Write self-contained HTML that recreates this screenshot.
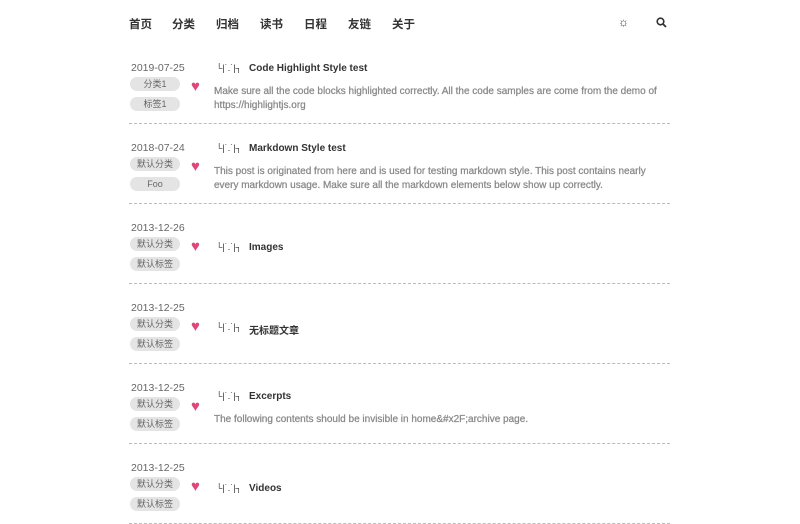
<html><head><style>
body{margin:0;width:800px;height:500px;overflow:hidden;background:#fff;font-family:"Liberation Sans","Noto Sans CJK SC",sans-serif;color:#333}
.nav{position:absolute;top:16px;left:129px;font-size:11.5px;font-weight:bold;color:#333}
.nav span{position:absolute;white-space:nowrap}
.e{position:absolute;left:129px;width:541px;height:80px;border-bottom:1px dashed #bbb}
.d{position:absolute;left:2px;top:0;font-size:10.5px;color:#666}
.t{position:absolute;left:1px;width:50px;height:14px;border-radius:7px;background:#e4e4e4;font-size:9px;color:#666;text-align:center;line-height:14px}
.h{position:absolute;left:62px;color:#e0457b;font-size:15px}
.ti{position:absolute;left:87px;font-size:10px;font-weight:bold;color:#333;white-space:nowrap}
.ti b{display:inline-block;width:33px;font-weight:normal;font-size:9px;letter-spacing:0;overflow:hidden;vertical-align:top}
.p{position:absolute;left:85px;width:445px;font-size:10px;color:#888;line-height:14px;-webkit-text-stroke:0.25px #888}
</style></head><body>
<div class="nav"><span style="left:0">首页</span><span style="left:43px">分类</span><span style="left:87px">归档</span><span style="left:131px">读书</span><span style="left:175px">日程</span><span style="left:219px">友链</span><span style="left:263px">关于</span><span style="left:489px;font-size:12px;top:-1px">☼</span><span style="left:527px;top:1px">
<svg width="11" height="11" viewBox="0 0 11 11"><circle cx="4.5" cy="4.5" r="3.3" fill="none" stroke="#333" stroke-width="1.6"/><path d="M7 7l3 3" stroke="#333" stroke-width="1.8"/></svg></span></div>

<div class="e" style="top:43px"><div class="d" style="top:19px">2019-07-25</div><div class="t" style="top:34px">分类1</div><div class="t" style="top:54px">标签1</div><div class="h" style="top:35px">♥</div><div class="ti" style="top:20px"><b>└|˙.˙|┐</b>Code Highlight Style test</div><div class="p" style="top:42px">Make sure all the code blocks highlighted correctly. All the code samples are come from the demo of https://highlightjs.org</div></div>

<div class="e" style="top:123px"><div class="d" style="top:19px">2018-07-24</div><div class="t" style="top:34px">默认分类</div><div class="t" style="top:54px">Foo</div><div class="h" style="top:35px">♥</div><div class="ti" style="top:20px"><b>└|˙.˙|┐</b>Markdown Style test</div><div class="p" style="top:42px">This post is originated from here and is used for testing markdown style. This post contains nearly every markdown usage. Make sure all the markdown elements below show up correctly.</div></div>

<div class="e" style="top:203px"><div class="d" style="top:19px">2013-12-26</div><div class="t" style="top:34px">默认分类</div><div class="t" style="top:54px">默认标签</div><div class="h" style="top:35px">♥</div><div class="ti" style="top:39px"><b>└|˙.˙|┐</b>Images</div></div>

<div class="e" style="top:283px"><div class="d" style="top:19px">2013-12-25</div><div class="t" style="top:34px">默认分类</div><div class="t" style="top:54px">默认标签</div><div class="h" style="top:35px">♥</div><div class="ti" style="top:39px"><b>└|˙.˙|┐</b>无标题文章</div></div>

<div class="e" style="top:363px"><div class="d" style="top:19px">2013-12-25</div><div class="t" style="top:34px">默认分类</div><div class="t" style="top:54px">默认标签</div><div class="h" style="top:35px">♥</div><div class="ti" style="top:28px"><b>└|˙.˙|┐</b>Excerpts</div><div class="p" style="top:50px">The following contents should be invisible in home&amp;#x2F;archive page.</div></div>

<div class="e" style="top:443px"><div class="d" style="top:19px">2013-12-25</div><div class="t" style="top:34px">默认分类</div><div class="t" style="top:54px">默认标签</div><div class="h" style="top:35px">♥</div><div class="ti" style="top:40px"><b>└|˙.˙|┐</b>Videos</div></div>
</body></html>
